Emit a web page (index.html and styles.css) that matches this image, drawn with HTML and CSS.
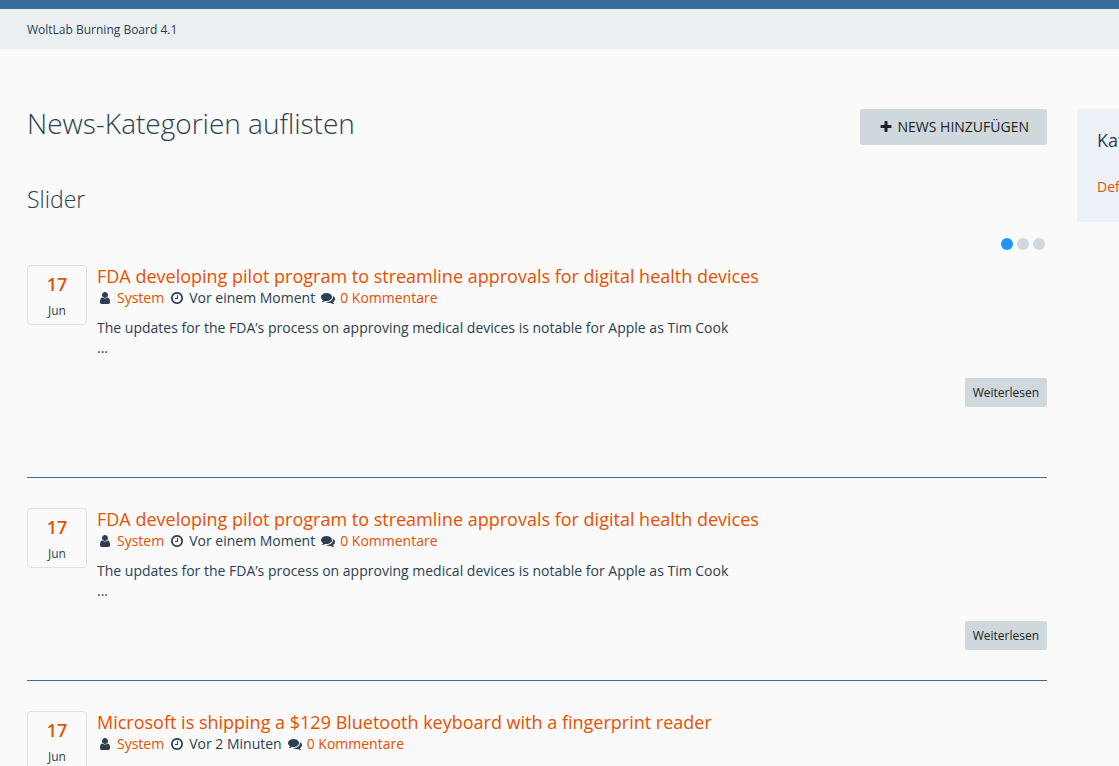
FILE: index.html
```html
<!DOCTYPE html>
<html lang="de">
<head>
<meta charset="utf-8">
<title>News-Kategorien auflisten</title>
<link rel="stylesheet" href="styles.css">
</head>
<body>
<svg class="sprite" aria-hidden="true">
  <symbol id="plus" viewBox="0 0 1792 1792"><path d="M1600 736v192q0 40-28 68t-68 28h-416v416q0 40-28 68t-68 28h-192q-40 0-68-28t-28-68v-416h-416q-40 0-68-28t-28-68v-192q0-40 28-68t68-28h416v-416q0-40 28-68t68-28h192q40 0 68 28t28 68v416h416q40 0 68 28t28 68z"/></symbol>
  <symbol id="user" viewBox="0 0 1792 1792"><path d="M1536 1399q0 109-62.5 187t-150.5 78h-854q-88 0-150.5-78t-62.5-187q0-85 8.5-160.5t31.5-152 58.5-131 94-89 134.5-34.5q131 128 313 128t313-128q76 0 134.5 34.5t94 89 58.5 131 31.5 152 8.5 160.5zm-256-887q0 159-112.5 271.5t-271.5 112.5-271.5-112.5-112.5-271.5 112.5-271.5 271.5-112.5 271.5 112.5 112.5 271.5z"/></symbol>
  <symbol id="clock" viewBox="0 0 1792 1792"><path d="M1024 544v448q0 14-9 23t-23 9h-320q-14 0-23-9t-9-23v-64q0-14 9-23t23-9h224v-352q0-14 9-23t23-9h64q14 0 23 9t9 23zm416 352q0-148-73-273t-198-198-273-73-273 73-198 198-73 273 73 273 198 198 273 73 273-73 198-198 73-273zm224 0q0 209-103 385.5t-279.5 279.5-385.5 103-385.5-103-279.5-279.5-103-385.5 103-385.5 279.5-279.5 385.5-103 385.5 103 279.5 279.5 103 385.5z"/></symbol>
  <symbol id="comments" viewBox="0 0 1792 1792"><path d="M1408 768q0 139-94 257t-256.5 186.5-353.5 68.5q-86 0-176-16-124 88-278 128-36 9-86 16h-3q-11 0-20.5-8t-11.5-21q-1-3-1-6.5t.5-6.5 2-6l2.5-5 3.5-5.5 4-5 4.5-5 4-4.5q5-6 23-25t26-29.5 22.5-29 25-38.5 20.5-44q-124-72-195-177t-71-224q0-139 94-257t256.5-186.5 353.5-68.5 353.5 68.5 256.5 186.5 94 257zm384 256q0 120-71 224.5t-195 176.5q10 24 20.5 44t25 38.5 22.5 29 26 29.5 23 25q1 1 4 4.5t4.5 5 4 5 3.5 5.5l2.5 5 2 6 .5 6.5-1 6.5q-3 14-13 22t-22 7q-50-7-86-16-154-40-278-128-90 16-176 16-271 0-472-132 58 4 88 4 161 0 309-45t264-129q125-92 192-212t67-254q0-77-23-152 129 71 204 178t75 230z"/></symbol>
</svg>
<header class="page-header"></header>
<nav class="breadcrumbs"><a href="#">WoltLab Burning Board 4.1</a></nav>
<div class="layout">
  <main class="content">
    <div class="title-row">
      <h1>News-Kategorien auflisten</h1>
      <button class="button" type="button"><svg class="icon"><use href="#plus"/></svg>NEWS HINZUFÜGEN</button>
    </div>
    <section class="slider">
      <h2>Slider</h2>
      <div class="dots">
        <button class="dot active" type="button" aria-label="1"></button>
        <button class="dot" type="button" aria-label="2"></button>
        <button class="dot" type="button" aria-label="3"></button>
      </div>
      <article class="news featured">
        <div class="date"><span class="day">17</span><span class="month">Jun</span></div>
        <div class="body">
          <h3><a href="#">FDA developing pilot program to streamline approvals for digital health devices</a></h3>
          <ul class="meta">
            <li><svg class="icon"><use href="#user"/></svg><a href="#">System</a></li>
            <li><svg class="icon"><use href="#clock"/></svg>Vor einem Moment</li>
            <li><svg class="icon"><use href="#comments"/></svg><a href="#">0 Kommentare</a></li>
          </ul>
          <p>The updates for the FDA’s process on approving medical devices is notable for Apple as Tim Cook<br>...</p>
          <button class="button small" type="button">Weiterlesen</button>
        </div>
      </article>
    </section>
    <article class="news">
      <div class="date"><span class="day">17</span><span class="month">Jun</span></div>
      <div class="body">
        <h3><a href="#">FDA developing pilot program to streamline approvals for digital health devices</a></h3>
        <ul class="meta">
          <li><svg class="icon"><use href="#user"/></svg><a href="#">System</a></li>
          <li><svg class="icon"><use href="#clock"/></svg>Vor einem Moment</li>
          <li><svg class="icon"><use href="#comments"/></svg><a href="#">0 Kommentare</a></li>
        </ul>
        <p>The updates for the FDA’s process on approving medical devices is notable for Apple as Tim Cook<br>...</p>
        <button class="button small" type="button">Weiterlesen</button>
      </div>
    </article>
    <article class="news">
      <div class="date"><span class="day">17</span><span class="month">Jun</span></div>
      <div class="body">
        <h3><a href="#">Microsoft is shipping a $129 Bluetooth keyboard with a fingerprint reader</a></h3>
        <ul class="meta">
          <li><svg class="icon"><use href="#user"/></svg><a href="#">System</a></li>
          <li><svg class="icon"><use href="#clock"/></svg>Vor 2 Minuten</li>
          <li><svg class="icon"><use href="#comments"/></svg><a href="#">0 Kommentare</a></li>
        </ul>
      </div>
    </article>
  </main>
  <aside class="sidebar">
    <h2>Kategorien</h2>
    <a href="#">Default</a>
  </aside>
</div>
</body>
</html>
```

FILE: styles.css
```css
* { box-sizing: border-box; }
body {
  margin: 0;
  height: 100vh;
  overflow: hidden;
  background: #fafafa;
  color: #2c3e50;
  font: 14px/20px "Open Sans", sans-serif;
}
h1, h2, h3, p, ul { margin: 0; padding: 0; }
a { color: #e65100; text-decoration: none; }
.sprite { display: none; }
.icon { width: 14px; height: 14px; fill: currentColor; }

.page-header { height: 9px; background: #3a6d9c; }
.breadcrumbs { padding: 11px 27px 9px; background: #ebeff2; font-size: 12px; }
.breadcrumbs a { color: #2c3e50; }

.layout {
  display: flex;
  align-items: flex-start;
  gap: 30px;
  padding: 60px 0 0 27px;
}
.content { flex: 1; min-width: 0; }
.sidebar {
  flex: none;
  width: 260px;
  margin-right: -218px;
  padding: 20px;
  background: #ecf1f7;
}
.sidebar h2 { margin-bottom: 26px; font-size: 18px; line-height: 22px; font-weight: 400; }
.sidebar a { display: block; line-height: 20px; padding-bottom: 5px; }

.title-row { display: flex; justify-content: space-between; align-items: flex-start; }
h1 { font-size: 28px; line-height: 28px; font-weight: 300; }
.button {
  display: flex;
  align-items: center;
  gap: 5px;
  padding: 8px 18px 8px 19px;
  border: 0;
  border-radius: 2px;
  background: #cfd8dc;
  color: #212121;
  font: inherit;
}
.button.small { align-self: flex-end; margin-top: 20px; padding: 5px 8px; font-size: 12px; line-height: 19px; }

.slider { padding: 40px 0 70px; border-bottom: 1px solid #3a6d9c; }
.slider h2 { font-size: 23px; line-height: 28px; font-weight: 300; }
.dots { display: flex; justify-content: flex-end; gap: 4px; padding: 25px 2px 15px; }
.dot { width: 12px; height: 12px; padding: 0; border: 0; border-radius: 50%; background: #cfd8dc; }
.dot.active { background: #2196f3; }

.news { display: flex; align-items: flex-start; gap: 10px; padding: 30px 0; border-bottom: 1px solid #3a6d9c; }
.news.featured { padding: 0; border: 0; }
.date {
  display: flex;
  flex: none;
  flex-direction: column;
  align-items: center;
  width: 60px;
  height: 60px;
  padding-top: 6px;
  border: 1px solid #e0e0e0;
  border-radius: 4px;
}
.day { color: #e65100; font-size: 18px; line-height: 24px; font-weight: 600; }
.month { font-size: 12px; line-height: 30px; }
.body { display: flex; flex: 1; flex-direction: column; }
.body h3 { font-size: 18px; line-height: 23px; font-weight: 400; }
.meta { display: flex; gap: 5px; list-style: none; }
.meta li { display: flex; align-items: center; gap: 4px; }
.meta .icon { width: 16px; }
.body p { margin-top: 10px; }
```
